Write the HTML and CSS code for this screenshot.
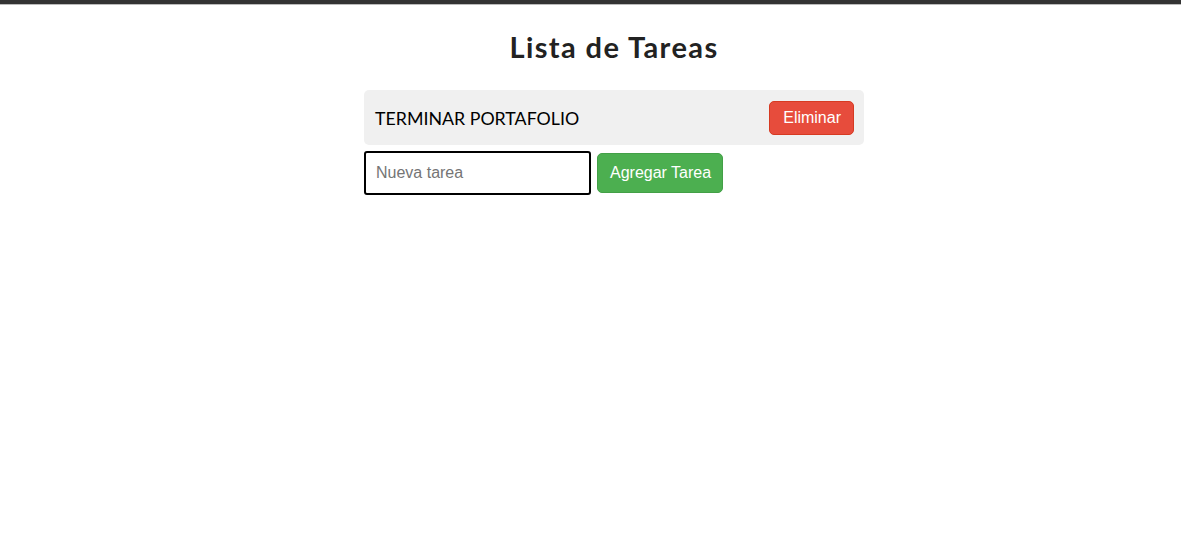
FILE: index.html
```html
<!DOCTYPE html>
<html lang="es">
<head>
<meta charset="utf-8">
<title>Lista de Tareas</title>
<link rel="stylesheet" href="styles.css">
</head>
<body>
<div class="topbar"></div>
<div class="page">
  <main class="app">
    <h1 class="title">Lista de Tareas</h1>
    <ul class="tasks">
      <li class="task">
        <span class="task-text">TERMINAR PORTAFOLIO</span>
        <button class="btn btn-delete">Eliminar</button>
      </li>
    </ul>
    <div class="add-row">
      <input class="task-input" type="text" placeholder="Nueva tarea">
      <button class="btn btn-add">Agregar Tarea</button>
    </div>
  </main>
</div>
</body>
</html>
```
FILE: styles.css
```css
html, body {
  margin: 0;
  padding: 0;
  background: #fff;
}
body {
  font-family: "Trebuchet MS", Lato, "DejaVu Sans", sans-serif;
  color: #222;
}
.topbar {
  height: 4px;
  background: #333;
  border-bottom: 1px solid #bbb;
}
.page {
  padding-left: 47px;
}
.app {
  width: 500px;
  margin: 0 auto;
}
.title {
  margin: 25px 0 26px;
  text-align: center;
  font-size: 29px;
  font-weight: 700;
  line-height: 34px;
  letter-spacing: 1.4px;
  color: #222;
}
.tasks {
  list-style: none;
  margin: 0;
  padding: 0;
}
.task {
  display: flex;
  align-items: center;
  justify-content: space-between;
  background: #f0f0f0;
  border-radius: 5px;
  padding: 10px 10px 10px 11px;
  height: 35px;
  margin-bottom: 6px;
}
.task-text {
  font-size: 17.8px;
  color: #000;
}
.btn {
  font-family: "Liberation Sans", Arial, sans-serif;
  font-size: 16px;
  color: #fff;
  border-radius: 5px;
  cursor: pointer;
}
.btn-delete {
  background: #e74c3c;
  border: 1px solid #d63a22;
  height: 34px;
  padding: 0 12px 0 13px;
}
.add-row {
  display: flex;
  align-items: center;
  gap: 6px;
}
.task-input {
  box-sizing: border-box;
  width: 227px;
  height: 44px;
  border: 2px solid #000;
  border-radius: 3px;
  padding: 0 10px;
  font-family: "Liberation Sans", Arial, sans-serif;
  font-size: 16px;
  color: #222;
}
.task-input::placeholder {
  color: #757575;
}
.btn-add {
  background: #4caf50;
  border: 1px solid #43a047;
  height: 40px;
  padding: 0 11px 0 12px;
}
```
